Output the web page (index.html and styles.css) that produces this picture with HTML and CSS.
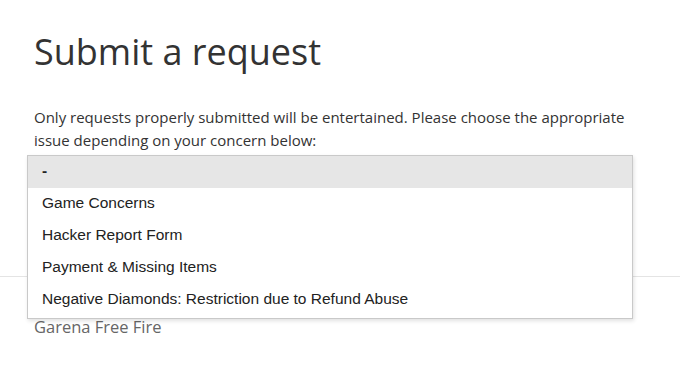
FILE: index.html
```html
<!DOCTYPE html>
<html lang="en">
<head>
<meta charset="utf-8">
<title>Submit a request</title>
<link rel="stylesheet" href="styles.css">
</head>
<body>
<main class="page">
  <h1 class="title">Submit a request</h1>
  <p class="intro">Only requests properly submitted will be entertained. Please choose the appropriate issue depending on your concern below:</p>
  <div class="field">
    <ul class="listbox">
      <li class="option selected">-</li>
      <li class="option">Game Concerns</li>
      <li class="option">Hacker Report Form</li>
      <li class="option">Payment &amp; Missing Items</li>
      <li class="option">Negative Diamonds: Restriction due to Refund Abuse</li>
    </ul>
  </div>
</main>
<footer class="footer">
  <div class="footer-inner">Garena Free Fire</div>
</footer>
</body>
</html>
```

FILE: styles.css
```css
html, body {
  margin: 0;
  padding: 0;
  background: #ffffff;
}

body {
  font-family: "Open Sans", "Noto Sans", sans-serif;
  color: #333333;
}

.page {
  padding: 30px 20px 0 34px;
}

.title {
  margin: 0;
  font-size: 36px;
  line-height: 43px;
  font-weight: 400;
  color: #333333;
}

.intro {
  margin: 33px 0 0;
  width: 600px;
  font-size: 15px;
  line-height: 23px;
  color: #333333;
}

.field {
  position: relative;
  margin-top: 3px;
  height: 34px;
}

.listbox {
  position: absolute;
  top: 0;
  left: -7px;
  width: 604px;
  margin: 0;
  padding: 0 0 2px;
  list-style: none;
  background: #ffffff;
  border: 1px solid #c9c9c9;
  box-shadow: 1px 2px 4px rgba(0, 0, 0, 0.12);
  z-index: 2;
}

.option {
  height: 30px;
  line-height: 30px;
  padding: 0 8px 2px 14px;
  font-family: "Liberation Sans", Arial, sans-serif;
  font-size: 15.5px;
  color: #222222;
}

.option.selected {
  background: #e6e6e6;
  font-weight: 700;
}

.footer {
  margin-top: 87px;
  border-top: 1px solid #e4e4e4;
}

.footer-inner {
  padding: 38px 0 0 34px;
  font-size: 16.5px;
  line-height: 24px;
  color: #666666;
}
```
